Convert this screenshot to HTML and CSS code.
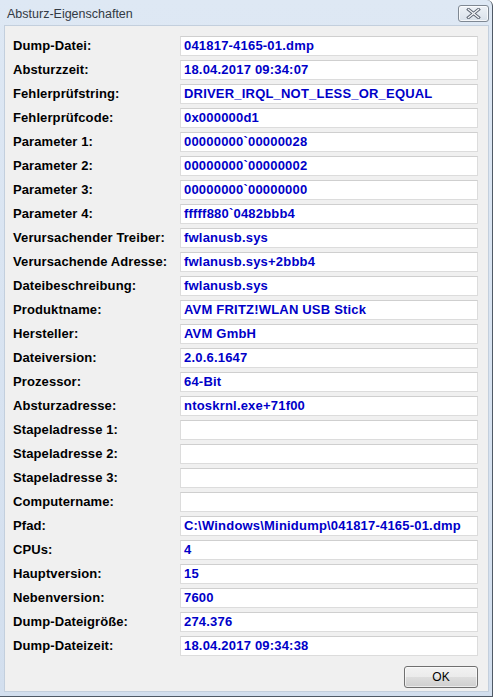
FILE: index.html
```html
<!DOCTYPE html>
<html lang="de">
<head>
  <meta charset="UTF-8">
  <title>Absturz-Eigenschaften</title>
  <link rel="stylesheet" href="styles.css">
</head>
<body>

<div class="window">
  <div class="titlebar">
    <span class="title">Absturz-Eigenschaften</span>
    <button class="close-btn" title="Schließen">
      <svg width="15" height="11" viewBox="0 0 15 11">
        <path d="M2.5 1.5 L12.5 9.5 M12.5 1.5 L2.5 9.5" stroke="#5d6572" stroke-width="3.2" stroke-linecap="square"/>
        <path d="M2.5 1.5 L12.5 9.5 M12.5 1.5 L2.5 9.5" stroke="#f4f6f9" stroke-width="1.3" stroke-linecap="square"/>
      </svg>
    </button>
  </div>

  <div class="client">
    <div class="fields" id="fields"></div>
    <div class="buttons">
      <button class="ok-btn">OK</button>
    </div>
  </div>
</div>

<script>
  const rows = [
    ['Dump-Datei:', '041817-4165-01.dmp'],
    ['Absturzzeit:', '18.04.2017 09:34:07'],
    ['Fehlerprüfstring:', 'DRIVER_IRQL_NOT_LESS_OR_EQUAL'],
    ['Fehlerprüfcode:', '0x000000d1'],
    ['Parameter 1:', '00000000`00000028'],
    ['Parameter 2:', '00000000`00000002'],
    ['Parameter 3:', '00000000`00000000'],
    ['Parameter 4:', 'fffff880`0482bbb4'],
    ['Verursachender Treiber:', 'fwlanusb.sys'],
    ['Verursachende Adresse:', 'fwlanusb.sys+2bbb4'],
    ['Dateibeschreibung:', 'fwlanusb.sys'],
    ['Produktname:', 'AVM FRITZ!WLAN USB Stick'],
    ['Hersteller:', 'AVM GmbH'],
    ['Dateiversion:', '2.0.6.1647'],
    ['Prozessor:', '64-Bit'],
    ['Absturzadresse:', 'ntoskrnl.exe+71f00'],
    ['Stapeladresse 1:', ''],
    ['Stapeladresse 2:', ''],
    ['Stapeladresse 3:', ''],
    ['Computername:', ''],
    ['Pfad:', 'C:\\Windows\\Minidump\\041817-4165-01.dmp'],
    ['CPUs:', '4'],
    ['Hauptversion:', '15'],
    ['Nebenversion:', '7600'],
    ['Dump-Dateigröße:', '274.376'],
    ['Dump-Dateizeit:', '18.04.2017 09:34:38']
  ];

  const fields = document.getElementById('fields');
  rows.forEach(([label, value]) => {
    const l = document.createElement('div');
    l.className = 'label';
    l.textContent = label;
    const v = document.createElement('div');
    v.className = 'value';
    v.textContent = value;
    fields.appendChild(l);
    fields.appendChild(v);
  });
</script>

</body>
</html>
```

FILE: styles.css
```css
html, body {
  margin: 0;
  padding: 0;
  height: 100%;
  background: #ffffff;
  overflow: hidden;
}

.window {
  box-sizing: border-box;
  width: 493px;
  height: 697px;
  background: linear-gradient(to bottom, #dee8f4, #d3dfee);
  border-right: 1px solid #505a66;
  border-bottom: 1px solid #505a66;
  border-top-right-radius: 6px;
  padding: 0 3px 4px 4px;
  display: flex;
  flex-direction: column;
}

.titlebar {
  height: 25px;
  display: flex;
  align-items: center;
  justify-content: space-between;
  padding-left: 3px;
}

.title {
  font-family: "Liberation Sans", Arial, sans-serif;
  font-size: 12.5px;
  color: #333a44;
  padding-top: 2px;
}

.close-btn {
  width: 31px;
  height: 17px;
  margin-top: 1px;
  padding: 0;
  border: 1px solid #7f8893;
  border-radius: 3px;
  background: linear-gradient(to bottom, #eef2f7, #d9e1ea);
  box-shadow: inset 0 0 0 1px rgba(255, 255, 255, 0.7);
  display: flex;
  align-items: center;
  justify-content: center;
}

.client {
  flex: 1;
  background: #f0f0f0;
  border: 1px solid #c3cfdd;
  display: flex;
  flex-direction: column;
  padding: 10px 10px 0 8px;
}

.fields {
  display: grid;
  grid-template-columns: 167px 298px;
  grid-auto-rows: 20px;
  row-gap: 4px;
  font-family: "Liberation Sans", Arial, sans-serif;
  font-size: 13px;
  font-weight: bold;
}

.label {
  color: #000;
  line-height: 20px;
  letter-spacing: 0.1px;
}

.value {
  box-sizing: border-box;
  background: #fff;
  border: 1px solid #dcdcdc;
  border-top-color: #cfcfcf;
  color: #0000c8;
  line-height: 18px;
  padding-left: 3px;
  letter-spacing: 0.2px;
  white-space: nowrap;
  overflow: hidden;
}

.buttons {
  display: flex;
  justify-content: flex-end;
  margin-top: 10px;
}

.ok-btn {
  width: 74px;
  height: 22px;
  border: 1px solid #707070;
  border-radius: 3px;
  background: linear-gradient(to bottom, #f2f2f2 0%, #ebebeb 50%, #dddddd 51%, #cfcfcf 100%);
  box-shadow: inset 0 0 0 1px rgba(255, 255, 255, 0.6);
  font-family: "Liberation Sans", Arial, sans-serif;
  font-size: 12px;
  color: #000;
  padding: 0;
}
```
